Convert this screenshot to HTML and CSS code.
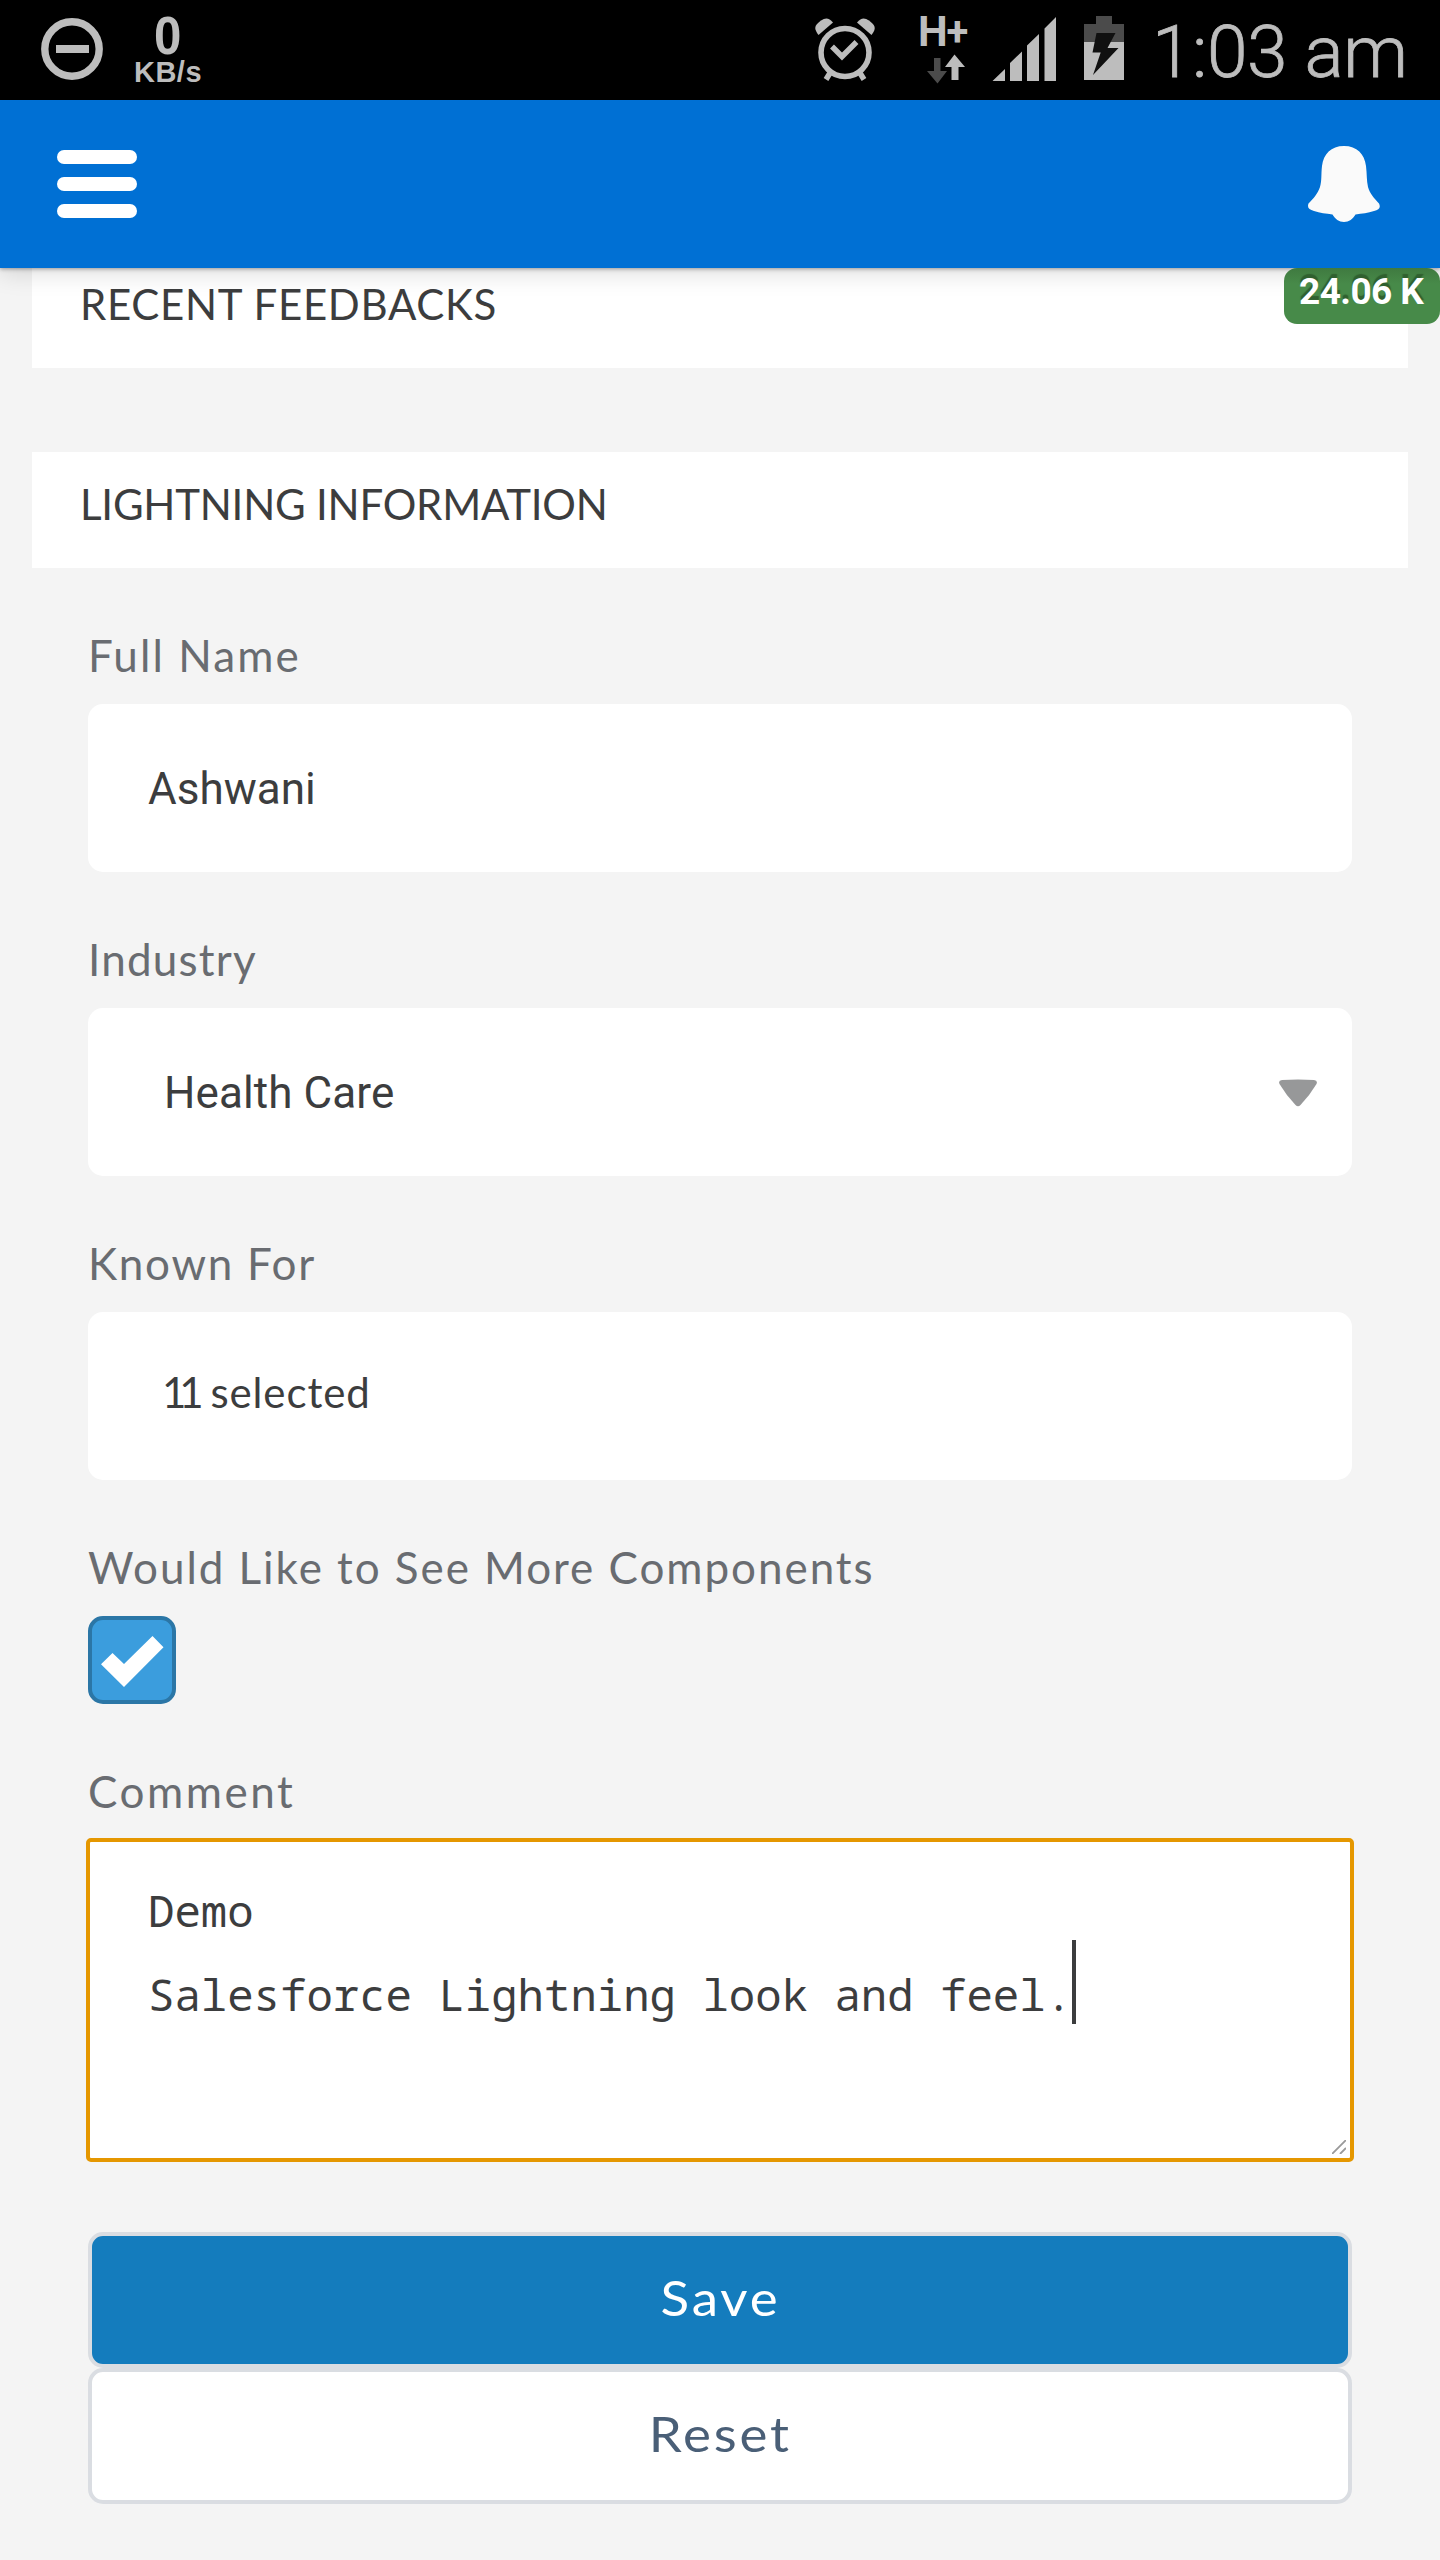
FILE: index.html
```html
<!DOCTYPE html>
<html lang="en">
<head>
<meta charset="utf-8">
<title>Lightning Information</title>
<link rel="stylesheet" href="styles.css">
</head>
<body>
<div class="status">
  <svg class="status-dnd" width="62" height="62" viewBox="41 18 62 62"><circle cx="72" cy="49" r="27.2" fill="none" stroke="#bdbdbd" stroke-width="7.4"/><path d="M56 45h33v8H56z" fill="#bdbdbd"/></svg>
  <div class="speed"><span class="speed-value">0</span><span class="speed-unit">KB/s</span></div>
  <svg class="status-tray" width="310" height="100" viewBox="814 0 310 100" fill="#bdbdbd">
    <g fill="none" stroke="#bdbdbd">
      <circle cx="845" cy="52.5" r="24" stroke-width="5.6"/>
      <path d="M832 46.5l10 10 14.5-14.5" stroke-width="5.5"/>
      <path d="M830 73l-4 6.500M860 73l4 6.500" stroke-width="5.500"/>
    </g>
    <path d="M818.500 35C813 28 815 25 821 20.500c5-3.500 8-2.500 12 2z"/>
    <path d="M871.500 35c5.500-7 3.500-10-2.500-14.500-5-3.500-8-2.500-12 2z"/>
    <text class="net" x="918" y="46" font-size="42">H</text>
    <text class="net" x="946.500" y="45" font-size="40">+</text>
    <path d="M934 58h6.500v13H947L937.500 83.500 927 71h7z" fill="#4b4b4b"/>
    <path d="M951.500 80V67H945l9.500-12.500L965 67h-6.500v13z"/>
    <path d="M992.500 81L1005 69v12zM1010 81V63l12-11.500V81zM1027 81V45.500L1039 34v47zM1044.500 81V28.500L1056 17v64z"/>
    <path d="M1096 16h16v8h12v18h-40V24h12z" fill="#4b4b4b"/>
    <path d="M1084 42h40v38h-40z"/>
    <path d="M1096.500 33H1115.500L1107.500 48H1118.500L1093 75 1100.700 52.500H1092.500z" fill="#101010"/>
  </svg>
  <span class="clock">1:03 am</span>
</div>
<header class="header">
  <div class="menu"><i class="menu-bar"></i><i class="menu-bar"></i><i class="menu-bar"></i></div>
  <svg width="72" height="76" viewBox="1308 146 72 76" fill="#fafafa"><path d="M1344 146C1357 146 1364.500 154 1366 166C1367 174 1366.500 180 1368 187C1370 194 1374 198 1379 203.500C1381 208 1379 209.500 1374 211C1368 213 1362 213.500 1355.500 214.500C1353 219 1349 222 1344 222C1339 222 1335 219 1332.500 214.500C1326 213.500 1320 213 1314 211C1309 209.500 1307 208 1308.500 203.500C1314 198 1317.500 194 1320 187C1322 180 1321 174 1322 166C1323.500 154 1331 146 1344 146Z"/></svg>
  <span class="rate">24.06 K</span>
</header>
<main class="page">
  <h2 class="section section-first">RECENT FEEDBACKS</h2>
  <h2 class="section section-info">LIGHTNING INFORMATION</h2>
  <form class="form">
    <div class="label label-name">Full Name</div>
    <div class="field">Ashwani</div>
    <div class="label label-industry">Industry</div>
    <div class="field field-select"><span>Health Care</span><svg width="38" height="28" viewBox="0 0 38 28" fill="#979899"><path d="M3 1Q19 0 35 1Q39 1.500 37.500 5Q31 16 21.500 26Q19 28.500 16.500 26Q7 16 .5 5Q-1 1.500 3 1Z"/></svg></div>
    <div class="label label-known">Known For</div>
    <div class="field field-multi"><span class="count">11</span> selected</div>
    <div class="label">Would Like to See More Components</div>
    <div class="checkbox"><svg width="80" height="80" viewBox="0 0 80 80" fill="#fff"><path d="M9 44.300L20.500 33 32 44 60.500 16 71.500 27.300 32 67z"/></svg></div>
    <div class="label label-comment">Comment</div>
    <div class="comment">Demo<br>Salesforce Lightning look and feel.<i class="caret"></i><svg class="grip" width="14" height="14" viewBox="0 0 14 14"><path d="M0 14L14 0M8 14l6-6" stroke="#999" stroke-width="1.800"/></svg></div>
    <div class="actions">
      <div class="button button-save"><span class="button-text">Save</span></div>
      <div class="button button-reset"><span class="button-text">Reset</span></div>
    </div>
  </form>
</main>
</body>
</html>
```
FILE: styles.css
```css
* { box-sizing: border-box; }
body { margin: 0; width: 1440px; height: 2560px; overflow: hidden; background: #f4f4f4; color: #3c3d3e; font-family: Lato, sans-serif; }
svg { display: block; flex: none; }

.status { display: flex; align-items: center; height: 100px; padding: 0 36px 0 41px; background: #000; color: #bdbdbd; }
.status-dnd { margin-top: -2px; }
.speed { display: flex; flex-direction: column; align-items: center; width: 70px; margin-left: 30px; font-family: "Liberation Sans", sans-serif; font-weight: 700; }
.speed-value { height: 44px; font-size: 53px; line-height: 43px; transform: scaleX(.93); }
.speed-unit { height: 28px; font-size: 29px; line-height: 28px; letter-spacing: .5px; }
.status-tray { margin-left: auto; }
.net { font-family: Roboto, sans-serif; font-weight: 700; }
.clock { width: 252px; margin-left: 28px; font: 300 73px/100px Roboto, sans-serif; letter-spacing: -.4px; white-space: nowrap; padding-top: 3px; -webkit-text-stroke: .8px #bdbdbd; }

.header { position: relative; z-index: 2; display: flex; align-items: center; justify-content: space-between; height: 168px; padding: 0 60px 0 57px; background: #0070d4; box-shadow: 0 1px 4px rgba(0, 0, 0, .35), 0 6px 22px rgba(0, 0, 0, .13); }
.menu { display: flex; flex-direction: column; gap: 13.500px; width: 80px; }
.menu-bar { height: 13.700px; border-radius: 7px; background: #fff; }
.rate { position: absolute; top: 168px; right: 0; width: 156px; height: 56px; padding-left: 15px; border-radius: 13px; background: linear-gradient(#3f7a40, #478a49 16px); color: #fff; font: 700 37px/48px Roboto, sans-serif; letter-spacing: -.6px; text-shadow: 0 -4px 1px #30602f; }

.section { height: 116px; margin: 0 32px; padding-left: 48px; background: #fff; font-size: 42px; font-weight: 400; line-height: 105px; }
.section-first { margin-top: -16px; letter-spacing: .7px; }
.section-info { margin-top: 84px; letter-spacing: -.22px; }

.form { padding: 0 88px; }
.label { height: 136px; padding-top: 38px; color: #696c71; font-size: 44px; line-height: 98px; letter-spacing: 1.950px; white-space: nowrap; }
.label-name { letter-spacing: 2.100px; }
.label-industry { letter-spacing: 1.210px; }
.label-known { letter-spacing: 1.700px; }
.label-comment { letter-spacing: 2.540px; }
.field { height: 168px; padding: 2px 0 0 60px; border-radius: 15px; background: #fff; font: 44px/166px Roboto, sans-serif; }
.field-select { display: flex; align-items: center; justify-content: space-between; padding: 2px 35px 0 76px; letter-spacing: .1px; }
.field-multi { padding: 0 0 0 74px; font: 42px/161px Lato, sans-serif; letter-spacing: .9px; }
.count { letter-spacing: -7px; margin-right: 2px; }
.checkbox { width: 88px; height: 88px; border: 4px solid #2b76a6; border-radius: 15px; background: #3b9ddd; }

.comment { position: relative; height: 324px; margin: -2px -2px 0; padding: 26px 58px; border: 4px solid #e59700; border-radius: 5px; background: #fff; font: 44px/84px "Noto Sans Mono", "DejaVu Sans Mono", monospace; }
.caret { display: inline-block; width: 4px; height: 84px; margin-top: -12px; vertical-align: top; background: #3c3d3e; }
.grip { position: absolute; right: 4px; bottom: 4px; }

.actions { padding-top: 70px; }
.button { height: 136px; border: 4px solid #dadde2; border-radius: 15px; font-size: 49px; line-height: 123px; text-align: center; }
.button-text { display: inline-block; transform: scaleX(1.08); letter-spacing: 2.600px; }
.button-save { background: #147cbd; color: #fff; }
.button-reset { background: #fff; color: #4a5f77; }
```
